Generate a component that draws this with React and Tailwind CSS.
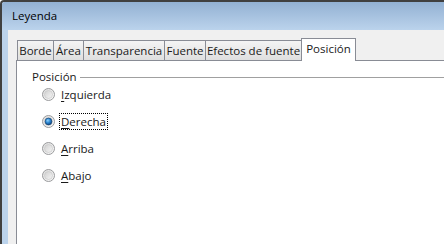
const FONT = { fontFamily: '"Open Sans", "Noto Sans", sans-serif' };

const tabs = [
  { label: "Borde", w: 37 },
  { label: "Área", w: 30 },
  { label: "Transparencia", w: 81 },
  { label: "Fuente", w: 41 },
  { label: "Efectos de fuente", w: 96 },
];

const options = [
  { key: "I", rest: "zquierda" },
  { key: "D", rest: "erecha", checked: true },
  { key: "A", rest: "rriba" },
  { key: "A", rest: "bajo" },
];

function Radio({ checked, id }) {
  return (
    <svg width="13" height="13" viewBox="0 0 13 13" className="shrink-0">
      <defs>
        <linearGradient id={`ring-${id}`} x1="0" y1="0" x2="1" y2="1">
          <stop offset="0" stopColor="#dcdcdc" />
          <stop offset="1" stopColor="#fafafa" />
        </linearGradient>
        <linearGradient id={`inner-${id}`} x1="0" y1="0" x2="1" y2="1">
          <stop offset="0" stopColor="#d0d0d0" />
          <stop offset="1" stopColor="#f6f6f6" />
        </linearGradient>
        <radialGradient id={`dot-${id}`} cx="0.4" cy="0.35" r="0.7">
          <stop offset="0" stopColor="#8fd3ff" />
          <stop offset="0.5" stopColor="#2a84cf" />
          <stop offset="1" stopColor="#0c3f78" />
        </radialGradient>
      </defs>
      <circle cx="6.5" cy="6.5" r="6" fill={`url(#ring-${id})`} stroke="#9a9b9d" strokeWidth="1" />
      <circle cx="6.5" cy="6.5" r="4" fill={`url(#inner-${id})`} stroke="#c4c4c4" strokeWidth="0.6" />
      {checked && <circle cx="6.5" cy="6.5" r="3.4" fill={`url(#dot-${id})`} stroke="#0e3a6a" strokeWidth="0.6" />}
    </svg>
  );
}

export default function App() {
  return (
    <div
      className="w-[444px] h-[244px] overflow-hidden bg-white border-t-2 border-l-2 border-[#404040] rounded-tl-[4px] flex flex-col text-[11.5px] text-[#1a1a1a]"
      style={FONT}
    >
      <div className="h-[28px] shrink-0 bg-linear-to-b from-[#93b1d3] to-[#bbd3ec] flex items-center pl-[10px] text-black">
        Leyenda
      </div>
      <div className="flex-1 flex min-h-0">
        <div className="w-[6px] shrink-0 bg-[#bbd3ec]" />
        <div className="flex-1 bg-[#f0f0f0] pl-[8px] pt-[8px] flex flex-col min-w-0">
          {/* tab strip */}
          <div className="flex items-end h-[22px] pl-[1px] relative z-10">
            {tabs.map((t, i) => (
              <div
                key={t.label}
                style={{ width: t.w }}
                className={`h-[20px] shrink-0 border-t border-r border-[#898c95] bg-linear-to-b from-[#f4f4f4] to-[#dfdfdf] flex items-center justify-center whitespace-nowrap ${i === 0 ? "border-l" : ""}`}
              >
                {t.label}
              </div>
            ))}
            <div className="w-[55px] h-[23px] -mb-px -ml-px shrink-0 border-t border-l border-r border-[#898c95] bg-white flex items-center justify-center pb-[3px] whitespace-nowrap">
              Posición
            </div>
          </div>
          {/* panel */}
          <div className="flex-1 bg-white border-t border-l border-[#898c95] pl-[15px] pt-[8px]">
            <div className="flex items-center h-[16px]">
              <span>Posición</span>
              <div className="flex-1 h-px bg-[#a0a0a0] ml-[3px]" />
            </div>
            <div className="pl-[10px] mt-px flex flex-col gap-[10px]">
              {options.map((o, i) => (
                <div key={i} className="flex items-center h-[17px]">
                  <Radio checked={o.checked} id={i} />
                  <span
                    className={`ml-[4px] px-px leading-[15px] border ${o.checked ? "border-dotted border-black" : "border-transparent"}`}
                  >
                    <span className="underline underline-offset-2">{o.key}</span>
                    {o.rest}
                  </span>
                </div>
              ))}
            </div>
          </div>
        </div>
      </div>
    </div>
  );
}
